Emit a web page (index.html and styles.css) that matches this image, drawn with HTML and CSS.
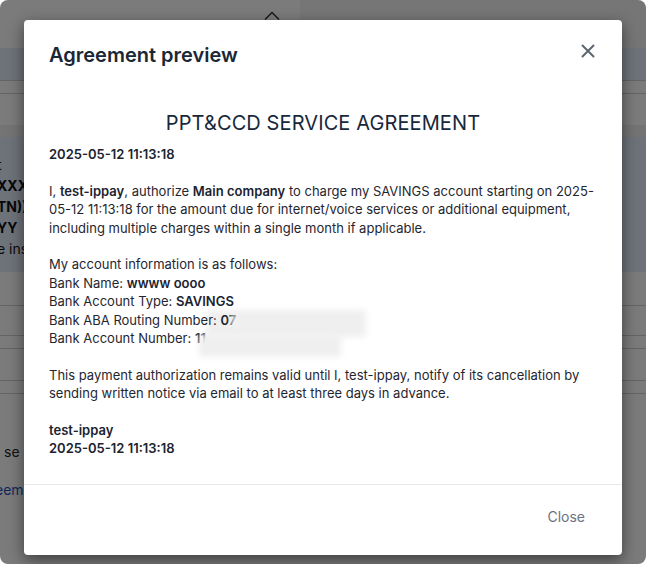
FILE: index.html
```html
<!DOCTYPE html>
<html lang="en">
<head>
<meta charset="utf-8">
<title>Agreement preview</title>
<link rel="stylesheet" href="styles.css">
</head>
<body>
<div class="frame">
  <div class="page">
    <div class="topbar"><div class="topbar-left"></div><div class="topbar-right"></div></div>
    <div class="row blue h32"></div>
    <div class="row line h13"></div>
    <div class="row line h32"></div>
    <div class="row dim h12"></div>
    <div class="row blue info">
      <div class="info-l">t</div>
      <div class="info-b">XXX</div>
      <div class="info-b">TN))</div>
      <div class="info-b">YY</div>
      <div class="info-l">e ins</div>
    </div>
    <div class="row h33"></div>
    <div class="row line h30"></div>
    <div class="row line h13"></div>
    <div class="row line h32"></div>
    <div class="row line h13"></div>
    <div class="row line h30"></div>
    <div class="text-row">D se</div>
    <div class="text-row link">eem</div>
  </div>
  <div class="overlay"></div>
  <svg class="caret" width="16" height="9" viewBox="0 0 16 9"><path d="M1 8.5 L8 1.5 L15 8.5" fill="none" stroke="#1a1a1a" stroke-width="1.5"/></svg>
  <div class="modal">
    <div class="modal-header">
      <h2 class="modal-title">Agreement preview</h2>
      <button class="close-btn" aria-label="Close">
        <svg width="14" height="14" viewBox="0 0 14 14"><path d="M1.5 1.5 L12.5 12.5 M12.5 1.5 L1.5 12.5" stroke="#5d6670" stroke-width="2" stroke-linecap="round"/></svg>
      </button>
    </div>
    <div class="modal-body">
      <h1 class="doc-title">PPT&amp;CCD SERVICE AGREEMENT</h1>
      <p class="date"><b>2025-05-12 11:13:18</b></p>
      <p>I, <b>test-ippay</b>, authorize <b>Main company</b> to charge my SAVINGS account starting on 2025-05-12 11:13:18 for the amount due for internet/voice services or additional equipment, including multiple charges within a single month if applicable.</p>
      <p>My account information is as follows:<br>
      Bank Name: <b>wwww oooo</b><br>
      Bank Account Type: <b>SAVINGS</b><br>
      Bank ABA Routing Number: <span class="masked"><b>07</b><span class="blur blur-a"></span><span class="fade"></span></span><br>
      Bank Account Number: <span class="masked"><b>11</b><span class="blur blur-b"></span></span></p>
      <p>This payment authorization remains valid until I, test-ippay, notify of its cancellation by sending written notice via email to at least three days in advance.</p>
      <p><b>test-ippay</b><br><b>2025-05-12 11:13:18</b></p>
    </div>
    <div class="modal-footer">
      <button class="footer-btn">Close</button>
    </div>
  </div>
</div>
</body>
</html>
```
FILE: styles.css
```css
* { box-sizing: border-box; }
html, body { margin: 0; padding: 0; background: #ffffff; }
body { font-family: Inter, "Noto Sans", sans-serif; }

.frame {
  position: relative;
  width: 646px;
  height: 564px;
  border-radius: 8px;
  overflow: hidden;
  background: #f6f6f6;
}

.page { display: flex; flex-direction: column; width: 100%; }
.topbar { display: flex; height: 48px; }
.topbar-left { width: 300px; background: #f6f6f6; }
.topbar-right { flex: 1; background: #ececec; }
.row { background: #f6f6f6; }
.row.line { border-top: 1px solid #c8c8c8; }
.row.blue { background: #dde6f4; }
.row.dim { background: #e8e8e8; }
.h12 { height: 12px; }
.h13 { height: 13px; }
.h30 { height: 30px; }
.h32 { height: 32px; }
.h33 { height: 33px; }
.info {
  height: 135px;
  padding: 17px 0 0 0;
  display: flex;
  flex-direction: column;
  font-size: 14px;
  line-height: 21px;
  color: #111;
  margin-left: -3px;
}
.info-b { font-weight: 700; }
.text-row {
  margin-top: 20px;
  font-size: 14px;
  line-height: 18px;
  color: #222;
  margin-left: -10px;
}
.text-row.link { color: #1d4fb8; margin-left: -5px; }

.overlay {
  position: absolute;
  inset: 0;
  background: rgba(0, 0, 0, 0.5);
}
.caret { position: absolute; left: 264px; top: 11px; }

.modal {
  position: absolute;
  left: 24px;
  top: 20px;
  width: 598px;
  height: 535px;
  background: #ffffff;
  border-radius: 4px;
  box-shadow: 0 5px 15px rgba(0, 0, 0, 0.5);
  display: flex;
  flex-direction: column;
}
.modal-header {
  display: flex;
  justify-content: space-between;
  align-items: flex-start;
  padding: 21px 25px 0 25px;
}
.modal-title {
  margin: 0;
  font-size: 20px;
  line-height: 28px;
  font-weight: 600;
  color: #1b2735;
}
.close-btn {
  border: 0;
  background: none;
  padding: 0;
  margin: 3px 2px 0 0;
  width: 14px;
  height: 14px;
  display: flex;
}

.modal-body {
  position: relative;
  z-index: 0;
  flex: 1;
  padding: 0 25px;
  font-size: 13px;
  line-height: 18.5px;
  color: #1f2630;
}
.modal-body b { font-weight: 600; color: #1b2330; }
.doc-title {
  margin: 39px 0 0 0;
  text-align: center;
  font-size: 20px;
  line-height: 30px;
  font-weight: 400;
  color: #18283a;
  letter-spacing: 0.1px;
}
.modal-body p { margin: 18px 0 0 0; }
.modal-body p.date { margin-top: 7px; }
.masked { position: relative; }
.blur {
  position: absolute;
  z-index: -1;
  background: #efefef;
  filter: blur(3px);
  border-radius: 4px;
}
.blur-a { left: -14px; top: -2px; width: 160px; height: 27px; }
.blur-b { left: 4px; top: 4px; width: 142px; height: 23px; z-index: 1; }
.fade {
  position: absolute;
  z-index: 2;
  left: 10px;
  top: 2px;
  width: 10px;
  height: 15px;
  background: rgba(242, 242, 242, 0.7);
  filter: blur(2px);
}

.modal-footer {
  height: 71px;
  border-top: 1px solid #e9e9e9;
  display: flex;
  justify-content: flex-end;
  align-items: flex-start;
  padding: 18px 25px 0 25px;
}
.footer-btn {
  border: 0;
  background: none;
  font-family: Inter, "Noto Sans", sans-serif;
  font-size: 14px;
  line-height: 16px;
  color: #6b7280;
  padding: 6px 12px;
}
```
